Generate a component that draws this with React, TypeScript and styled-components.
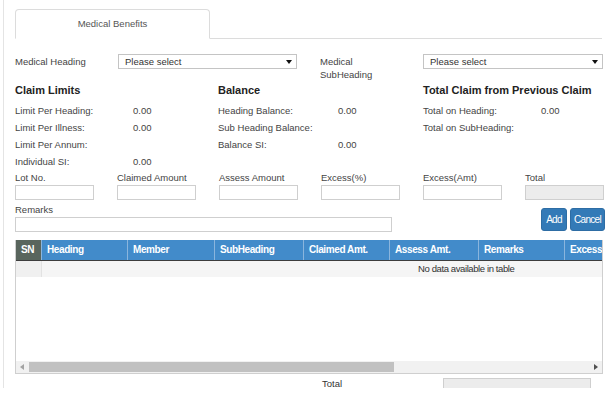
import styled, { createGlobalStyle } from "styled-components"

const GlobalStyle = createGlobalStyle`
  body {
    margin: 0;
    background: #fff;
    font-family: "Liberation Sans", Arial, sans-serif;
    color: #444;
  }
  * { box-sizing: border-box; }
`

const Page = styled.div`
  margin-left: 3px;
  height: 388px;
  width: 605px;
  border-left: 1px solid #e4e4e4;
  padding: 9px 0 0 11px;
`

const Content = styled.div`
  width: 588px;
`

const TabBar = styled.div`
  display: flex;
  height: 30px;
  border-bottom: 1px solid #dcdcdc;
  margin-right: 1px;
`

const Tab = styled.div`
  width: 195px;
  height: 30px;
  border: 1px solid #dcdcdc;
  border-bottom-color: #fff;
  border-radius: 4px 4px 0 0;
  text-align: center;
  line-height: 28px;
  font-size: 9.5px;
  color: #555;
`

const HeadingRow = styled.div`
  display: flex;
  margin-top: 15px;
`

const SelectGroup = styled.div<{ $w: number }>`
  display: flex;
  width: ${({ $w }) => $w}px;
`

const FieldLabel = styled.div<{ $w?: number; $pad?: number }>`
  width: ${({ $w }) => $w ?? 103}px;
  font-size: 9.5px;
  line-height: 13px;
  color: #444;
  padding-top: ${({ $pad }) => $pad ?? 0}px;
`

const Select = styled.div<{ $w: number }>`
  position: relative;
  width: ${({ $w }) => $w}px;
  height: 15px;
  border: 1px solid #c4c4c4;
  font-size: 9.5px;
  line-height: 13px;
  padding-left: 6px;
  color: #333;
  &::after {
    content: "";
    position: absolute;
    right: 4px;
    top: 5px;
    border-left: 3px solid transparent;
    border-right: 3px solid transparent;
    border-top: 4px solid #111;
  }
`

const StatsRow = styled.div`
  display: flex;
  margin-top: 2px;
`

const StatsColumn = styled.div<{ $w?: number }>`
  width: ${({ $w }) => ($w ? `${$w}px` : "auto")};
  flex: ${({ $w }) => ($w ? "none" : "1")};
`

const SectionTitle = styled.div`
  font-size: 11px;
  font-weight: bold;
  line-height: 14px;
  color: #222;
  margin-bottom: 5px;
`

const StatLine = styled.div`
  display: flex;
  font-size: 9.5px;
  line-height: 17px;
  color: #444;
`

const StatLabel = styled.span<{ $w: number }>`
  width: ${({ $w }) => $w}px;
  white-space: nowrap;
`

const FieldsRow = styled.div`
  display: flex;
  margin-top: 1px;
`

const Field = styled.div`
  width: 102px;
`

const Input = styled.div<{ $w: number; $disabled?: boolean; $gap?: number }>`
  width: ${({ $w }) => $w}px;
  height: 15px;
  margin-top: ${({ $gap }) => $gap ?? 2}px;
  border: 1px solid #cfcfcf;
  background: ${({ $disabled }) => ($disabled ? "#ececec" : "#fff")};
`

const RemarksRow = styled.div`
  display: flex;
  align-items: flex-end;
  justify-content: space-between;
  margin-top: 3px;
`

const Buttons = styled.div`
  display: flex;
  gap: 3px;
  margin-right: -2px;
  margin-bottom: 1px;
`

const Button = styled.button<{ $w: number }>`
  width: ${({ $w }) => $w}px;
  height: 23px;
  padding: 0;
  border: 1px solid #2e6da4;
  border-radius: 3px;
  background: #337ab7;
  color: #fff;
  font-family: "Liberation Sans", Arial, sans-serif;
  font-size: 10px;
  letter-spacing: -0.7px;
  text-align: center;
  white-space: nowrap;
`

const TableBox = styled.div`
  width: 588px;
  margin-top: 8px;
  border: 1px solid #cfcfcf;
  border-top: none;
`

const Viewport = styled.div`
  height: 121px;
  overflow: hidden;
`

const Table = styled.table`
  width: 900px;
  table-layout: fixed;
  border-collapse: collapse;
  margin-left: -1px;
`

const Col = styled.col<{ $w: number }>`
  width: ${({ $w }) => $w}px;
`

const Th = styled.th<{ $sn?: boolean }>`
  height: 20px;
  padding: 0 5px;
  text-align: left;
  font-size: 10px;
  font-weight: bold;
  letter-spacing: -0.4px;
  color: #fff;
  white-space: nowrap;
  overflow: hidden;
  background: ${({ $sn }) => ($sn ? "#59655d" : "#428bca")};
  border-left: 1px solid ${({ $sn }) => ($sn ? "#59655d" : "#8ab5dd")};
  border-bottom: 1px solid #3d3d3d;
`

const EmptyRow = styled.tr`
  background: #f5f5f5;
`

const SnCell = styled.td`
  height: 17px;
  border-right: 1px solid #e2e2e2;
  background: #f0f0f0;
`

const EmptyCell = styled.td`
  text-align: center;
  padding-right: 26px;
  font-size: 9.5px;
  letter-spacing: -0.4px;
  color: #333;
`

const ScrollBar = styled.div`
  display: flex;
  align-items: center;
  height: 12px;
  background: #f1f1f1;
`

const Arrow = styled.div`
  width: 12px;
  display: flex;
  justify-content: center;
  align-items: center;
`

const Track = styled.div`
  flex: 1;
  height: 12px;
  padding: 1px 0 1px 1px;
`

const Thumb = styled.div`
  width: 365px;
  height: 10px;
  background: #c1c1c1;
`

const TotalRow = styled.div`
  display: flex;
  align-items: flex-start;
  margin-top: 4px;
  padding-left: 307px;
`

const TotalLabel = styled.div`
  width: 121px;
  font-size: 9.5px;
  line-height: 11px;
  color: #333;
`

const columns = [
  { name: "SN", w: 26, sn: true },
  { name: "Heading", w: 86 },
  { name: "Member", w: 87 },
  { name: "SubHeading", w: 89 },
  { name: "Claimed Amt.", w: 86 },
  { name: "Assess Amt.", w: 89 },
  { name: "Remarks", w: 86 },
  { name: "Excess Amt.", w: 88 },
  { name: "Total", w: 88 },
  { name: "Lot No.", w: 88 },
  { name: "Action", w: 87 },
]

const fields = [
  { label: "Lot No." },
  { label: "Claimed Amount" },
  { label: "Assess Amount" },
  { label: "Excess(%)" },
  { label: "Excess(Amt)" },
  { label: "Total", disabled: true },
]

const stats = [
  {
    title: "Claim Limits",
    w: 203,
    labelW: 118,
    rows: [
      ["Limit Per Heading:", "0.00"],
      ["Limit Per Illness:", "0.00"],
      ["Limit Per Annum:", ""],
      ["Individual SI:", "0.00"],
    ],
  },
  {
    title: "Balance",
    w: 205,
    labelW: 120,
    rows: [
      ["Heading Balance:", "0.00"],
      ["Sub Heading Balance:", ""],
      ["Balance SI:", "0.00"],
    ],
  },
  {
    title: "Total Claim from Previous Claim",
    labelW: 118,
    rows: [
      ["Total on Heading:", "0.00"],
      ["Total on SubHeading:", ""],
    ],
  },
]

const ArrowIcon = ({ dir }: { dir: "left" | "right" }) => (
  <svg width="4" height="6" viewBox="0 0 4 6">
    {dir === "left" ? (
      <path d="M4 0 L0 3 L4 6 Z" fill="#a3a3a3" />
    ) : (
      <path d="M0 0 L4 3 L0 6 Z" fill="#505050" />
    )}
  </svg>
)

export default function App() {
  return (
    <>
      <GlobalStyle />
      <Page>
        <Content>
          <TabBar>
            <Tab>Medical Benefits</Tab>
          </TabBar>

          <HeadingRow>
            <SelectGroup $w={305}>
              <FieldLabel $pad={1}>Medical Heading</FieldLabel>
              <Select $w={179}>Please select</Select>
            </SelectGroup>
            <SelectGroup $w={283}>
              <FieldLabel $pad={1}>
                Medical
                <br />
                SubHeading
              </FieldLabel>
              <Select $w={180}>Please select</Select>
            </SelectGroup>
          </HeadingRow>

          <StatsRow>
            {stats.map(s => (
              <StatsColumn key={s.title} $w={s.w}>
                <SectionTitle>{s.title}</SectionTitle>
                {s.rows.map(([label, value]) => (
                  <StatLine key={label}>
                    <StatLabel $w={s.labelW}>{label}</StatLabel>
                    <span>{value}</span>
                  </StatLine>
                ))}
              </StatsColumn>
            ))}
          </StatsRow>

          <FieldsRow>
            {fields.map(f => (
              <Field key={f.label}>
                <FieldLabel $w={102}>{f.label}</FieldLabel>
                <Input $w={79} $disabled={f.disabled} $gap={1} />
              </Field>
            ))}
          </FieldsRow>

          <RemarksRow>
            <div>
              <FieldLabel $w={200}>Remarks</FieldLabel>
              <Input $w={377} $gap={1} />
            </div>
            <Buttons>
              <Button $w={26}>Add</Button>
              <Button $w={35}>Cancel</Button>
            </Buttons>
          </RemarksRow>

          <TableBox>
            <Viewport>
              <Table>
                <colgroup>
                  {columns.map(c => (
                    <Col key={c.name} $w={c.w} />
                  ))}
                </colgroup>
                <thead>
                  <tr>
                    {columns.map(c => (
                      <Th key={c.name} $sn={c.sn}>
                        {c.name}
                      </Th>
                    ))}
                  </tr>
                </thead>
                <tbody>
                  <EmptyRow>
                    <SnCell />
                    <EmptyCell colSpan={columns.length - 1}>
                      No data available in table
                    </EmptyCell>
                  </EmptyRow>
                </tbody>
              </Table>
            </Viewport>
            <ScrollBar>
              <Arrow>
                <ArrowIcon dir="left" />
              </Arrow>
              <Track>
                <Thumb />
              </Track>
              <Arrow>
                <ArrowIcon dir="right" />
              </Arrow>
            </ScrollBar>
          </TableBox>

          <TotalRow>
            <TotalLabel>Total</TotalLabel>
            <Input $w={148} $disabled $gap={0} />
          </TotalRow>
        </Content>
      </Page>
    </>
  )
}
